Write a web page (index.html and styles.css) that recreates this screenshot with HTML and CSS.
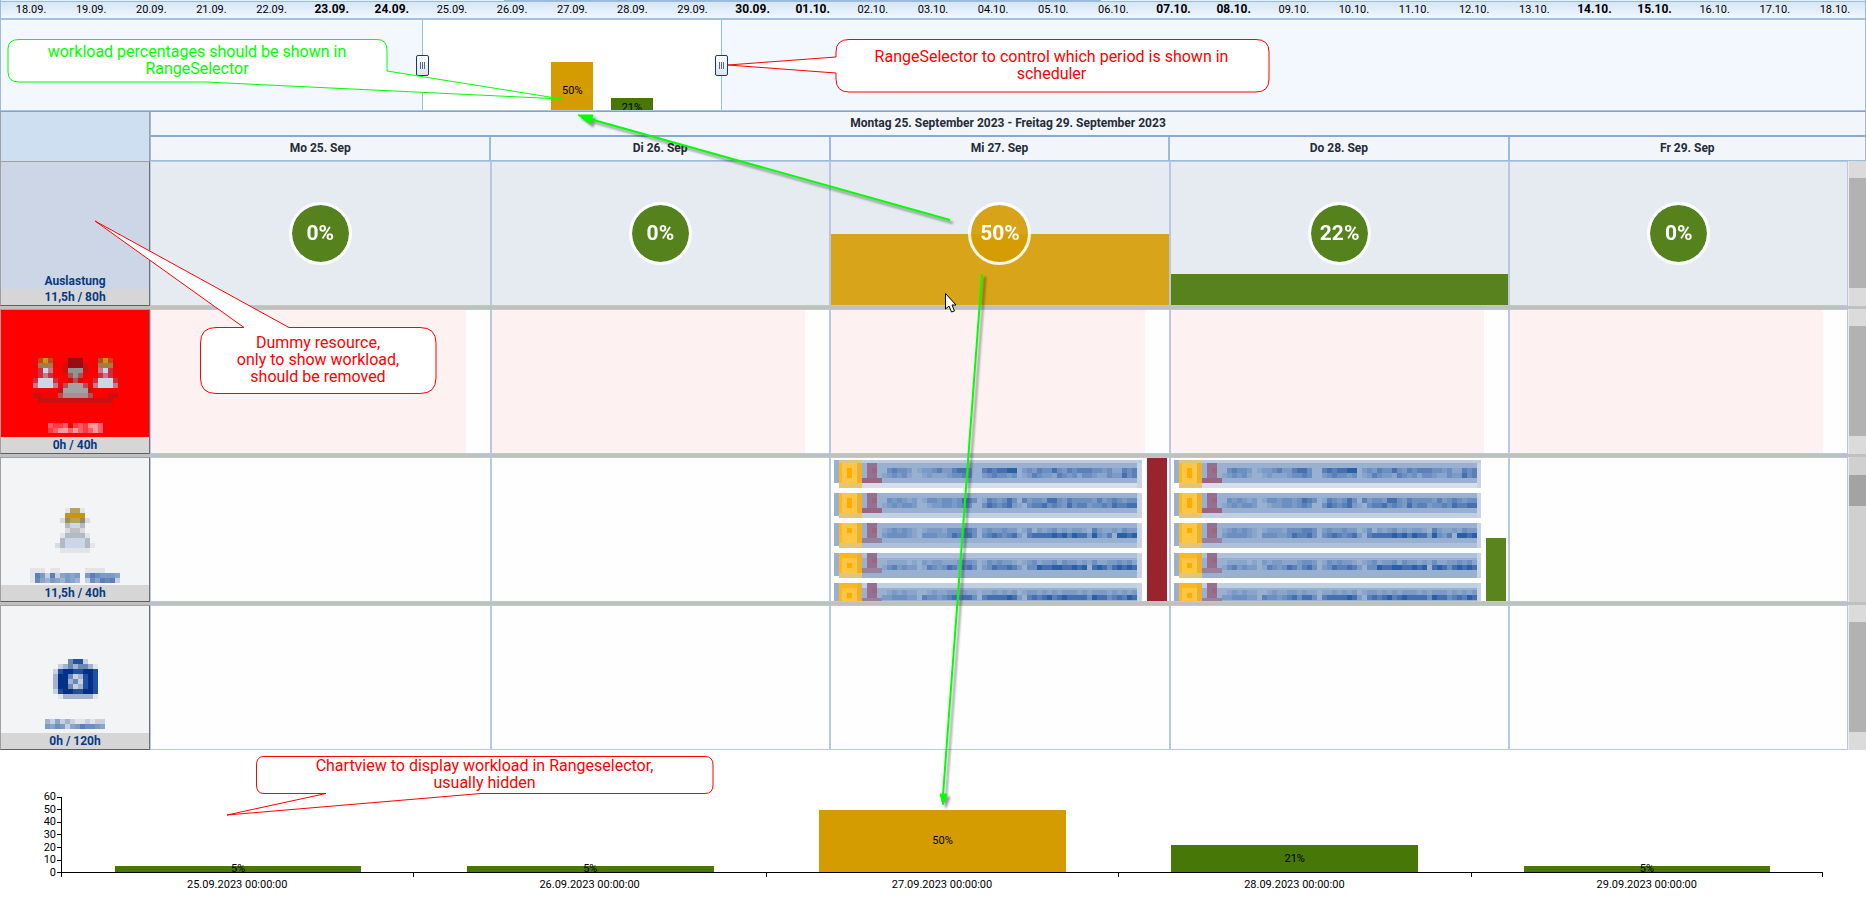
FILE: index.html
```
<!DOCTYPE html>
<html lang="de">
<head>
    <meta charset="UTF-8">
    <meta name="viewport" content="width=device-width, initial-scale=1.0">
    <title>Scheduler workload</title>
    <link rel="stylesheet" href="styles.css">
</head>
<body>
    <!-- Range selector -->
    <section class="range-selector">
        <div class="range-scroll"><div class="range-scroll-thumb"></div></div>
        <div class="range-scale">
            <span>18.09.</span><span>19.09.</span><span>20.09.</span><span>21.09.</span><span>22.09.</span>
            <span class="weekend">23.09.</span><span class="weekend">24.09.</span>
            <span>25.09.</span><span>26.09.</span><span>27.09.</span><span>28.09.</span><span>29.09.</span>
            <span class="weekend">30.09.</span><span class="weekend">01.10.</span>
            <span>02.10.</span><span>03.10.</span><span>04.10.</span><span>05.10.</span><span>06.10.</span>
            <span class="weekend">07.10.</span><span class="weekend">08.10.</span>
            <span>09.10.</span><span>10.10.</span><span>11.10.</span><span>12.10.</span><span>13.10.</span>
            <span class="weekend">14.10.</span><span class="weekend">15.10.</span>
            <span>16.10.</span><span>17.10.</span><span>18.10.</span>
        </div>
        <div class="range-plot">
            <div class="range-selected">
                <button class="range-handle range-handle-left" aria-label="Start"><i></i><i></i><i></i></button>
                <div class="range-day"></div>
                <div class="range-day"></div>
                <div class="range-day"><div class="range-bar half">50%</div></div>
                <div class="range-day"><div class="range-bar low">21%</div></div>
                <div class="range-day"></div>
                <button class="range-handle range-handle-right" aria-label="Ende"><i></i><i></i><i></i></button>
            </div>
        </div>
    </section>

    <!-- Scheduler -->
    <section class="scheduler">
        <div class="scheduler-head">
            <div class="corner"></div>
            <div class="period">Montag 25. September 2023 - Freitag 29. September 2023</div>
            <div class="day-head">Mo 25. Sep</div>
            <div class="day-head">Di 26. Sep</div>
            <div class="day-head">Mi 27. Sep</div>
            <div class="day-head">Do 28. Sep</div>
            <div class="day-head day-head-last">Fr 29. Sep</div>
        </div>

        <div class="row row-load">
            <div class="resource">
                <span class="resource-name">Auslastung</span>
                <span class="resource-hours">11,5h / 80h</span>
            </div>
            <div class="cell"><div class="badge low">0%</div></div>
            <div class="cell"><div class="badge low">0%</div></div>
            <div class="cell"><div class="load half" style="height: 50%"></div><div class="badge half">50%</div></div>
            <div class="cell"><div class="load low" style="height: 22%"></div><div class="badge low">22%</div></div>
            <div class="cell"><div class="badge low">0%</div></div>
            <div class="scroll"><div class="scroll-thumb"></div></div>
        </div>

        <div class="row row-blocked">
            <div class="resource">
                <svg class="mosaic" data-mosaic="team"></svg>
                <svg class="mosaic mosaic-name" data-mosaic="teamName"></svg>
                <span class="resource-hours">0h / 40h</span>
            </div>
            <div class="cell"></div>
            <div class="cell"></div>
            <div class="cell"></div>
            <div class="cell"></div>
            <div class="cell"></div>
            <div class="scroll"><div class="scroll-thumb"></div></div>
        </div>

        <div class="row row-person">
            <div class="resource">
                <svg class="mosaic" data-mosaic="person"></svg>
                <svg class="mosaic mosaic-name" data-mosaic="personName"></svg>
                <span class="resource-hours">11,5h / 40h</span>
            </div>
            <div class="cell"></div>
            <div class="cell"></div>
            <div class="cell cell-tasks">
                <div class="tasks"></div>
                <div class="day-load"><div class="full" style="height: 100%"></div></div>
            </div>
            <div class="cell cell-tasks">
                <div class="tasks"></div>
                <div class="day-load"><div class="low" style="height: 44%"></div></div>
            </div>
            <div class="cell"></div>
            <div class="scroll scroll-long"><div class="scroll-thumb"></div></div>
        </div>

        <div class="row">
            <div class="resource">
                <svg class="mosaic" data-mosaic="bag"></svg>
                <svg class="mosaic mosaic-name" data-mosaic="bagName"></svg>
                <span class="resource-hours">0h / 120h</span>
            </div>
            <div class="cell"></div>
            <div class="cell"></div>
            <div class="cell"></div>
            <div class="cell"></div>
            <div class="cell"></div>
            <div class="scroll"><div class="scroll-thumb"></div></div>
        </div>
    </section>

    <!-- Workload chart -->
    <section class="chart">
        <div class="chart-axis">
            <span>60</span><span>50</span><span>40</span><span>30</span><span>20</span><span>10</span><span>0</span>
        </div>
        <div class="chart-plot">
            <div class="chart-day"><div class="chart-bar low" style="height: 8%">5%</div></div>
            <div class="chart-day"><div class="chart-bar low" style="height: 8%">5%</div></div>
            <div class="chart-day"><div class="chart-bar half" style="height: 83%">50%</div></div>
            <div class="chart-day"><div class="chart-bar low" style="height: 36%">21%</div></div>
            <div class="chart-day"><div class="chart-bar low" style="height: 8%">5%</div></div>
        </div>
        <div class="chart-labels">
            <span>25.09.2023 00:00:00</span>
            <span>26.09.2023 00:00:00</span>
            <span>27.09.2023 00:00:00</span>
            <span>28.09.2023 00:00:00</span>
            <span>29.09.2023 00:00:00</span>
        </div>
    </section>

    <!-- Annotations drawn over the page -->
    <div class="annotations">
        <svg class="annotation-shapes">
            <g class="bubbles">
                <path class="green" d="M19 39.500H377Q387 39.500 387 50V71L562 99L205 82H19Q8 82 8 72V49Q8 39.500 19 39.500Z"/>
                <path class="red" d="M849 39.500H1256Q1269 39.500 1269 52V79Q1269 92 1256 92H849Q836 92 836 79V73L728 65L836 57V52Q836 39.500 849 39.500Z"/>
                <path class="red" d="M216 327.500H244L95 221L289 327.500H420Q436 327.500 436 343V378Q436 393.500 420 393.500H216Q200.500 393.500 200.500 378V343Q200.500 327.500 216 327.500Z"/>
                <path class="red" d="M264 756.500H705Q713 756.500 713 765V785Q713 793.500 705 793.500H481L227 815L326 793.500H264Q256.500 793.500 256.500 785V765Q256.500 756.500 264 756.500Z"/>
            </g>
            <g class="arrows">
                <path class="arrow-line" d="M950 220L590 119"/>
                <path d="M578 115L593 115L590 124Z"/>
                <path class="arrow-line" d="M982 274L943 795"/>
                <path d="M943 805L940 794L947 794Z"/>
            </g>
            <path class="cursor" d="M945.500 293.500V309L949 306L951.500 312L954.500 311L952 305H956Z"/>
        </svg>
        <p class="note note-percent">workload percentages should be shown in<br>RangeSelector</p>
        <p class="note note-range">RangeSelector to control which period is shown in<br>scheduler</p>
        <p class="note note-dummy">Dummy resource,<br>only to show workload,<br>should be removed</p>
        <p class="note note-chart">Chartview to display workload in Rangeselector,<br>usually hidden</p>
    </div>

    <script src="mosaic.js"></script>
</body>
</html>
```
FILE: styles.css
```
* {
    box-sizing: border-box;
}

body {
    margin: 0;
    position: relative;
    background-color: #fff;
    font-family: Roboto, "Liberation Sans", sans-serif;
    font-size: 11px;
    line-height: 12px;
    color: #000;
}

/* Workload colours */
.low {
    background-color: #477706;
}

.half {
    background-color: #d59c02;
}

.full {
    background-color: #9a242e;
}

/* Range selector */
.range-selector {
    border-left: 1px solid #9bbbdc;
    border-right: 1px solid #9bbbdc;
}

.range-scroll {
    height: 2px;
    background-color: #e6f0fa;
    border-bottom: 1px solid #9bbbdc;
}

.range-scroll-thumb {
    width: 32%;
    height: 1px;
    margin-left: 27%;
    background-color: #9bbbdc;
}

.range-scale {
    display: grid;
    grid-template-columns: repeat(31, 1fr);
    height: 18px;
    background: linear-gradient(#d6e6f5, #f0f7fe);
    border-bottom: 2px solid #a3c0e0;
    text-align: center;
    line-height: 15px;
}

.range-scale .weekend {
    font-size: 12px;
    font-weight: bold;
}

.range-plot {
    height: 91px;
    background-color: #f3f7fe;
    border-bottom: 1px solid #a9c4e2;
}

.range-selected {
    position: relative;
    display: grid;
    grid-template-columns: repeat(5, 1fr);
    width: 16.1%;
    height: 90px;
    margin-left: 22.6%;
    background-color: #fff;
    border-left: 1px solid #9bbbdc;
    border-right: 1px solid #9bbbdc;
}

.range-day {
    display: flex;
    align-items: flex-end;
    justify-content: center;
    overflow: hidden;
}

.range-bar {
    width: 42px;
    height: 48px;
    padding-top: 23px;
    text-align: center;
    overflow: hidden;
}

.range-bar.low {
    height: 12px;
    padding-top: 4px;
}

.range-handle {
    position: absolute;
    top: 35px;
    display: flex;
    align-items: center;
    justify-content: center;
    gap: 1px;
    width: 13px;
    height: 21px;
    padding: 0;
    background: linear-gradient(#fff, #dde2ea);
    border: 1px solid #123a78;
    border-radius: 2px;
}

.range-handle i {
    width: 1px;
    height: 7px;
    background-color: #52698f;
}

.range-handle-left {
    left: -7px;
}

.range-handle-right {
    right: -7px;
}

/* Scheduler */
.scheduler {
    font-size: 12px;
    font-weight: bold;
}

.scheduler-head,
.row {
    display: grid;
    grid-template-columns: 150px repeat(5, 1fr) 18px;
}

.scheduler-head {
    grid-template-rows: 25px 24px;
    color: #262b38;
    line-height: 22px;
    text-align: center;
    border-top: 1px solid #7fa3cc;
    border-right: 1px solid #9bbbdc;
}

.corner {
    grid-row: span 2;
    background-color: #cddff0;
    border-left: 1px solid #a0a0a0;
    border-right: 1px solid #a0a0a0;
}

.period {
    grid-column: span 6;
    background-color: #f2f6fb;
    border-left: 1px solid #9bbbdc;
    border-bottom: 2px solid #86abd2;
}

.day-head {
    background-color: #f2f6fb;
    border-left: 2px solid #9bbbdc;
    border-bottom: 1px solid #9bbbdc;
}

.period + .day-head {
    border-left-width: 1px;
}

.day-head-last {
    grid-column: span 2;
}

.row {
    height: 148px;
    border-bottom: 3px solid #c0c0c0;
}

.row:last-child {
    border-bottom: 0;
    height: 145px;
}

.resource {
    display: flex;
    flex-direction: column;
    align-items: center;
    justify-content: flex-end;
    background-color: #f3f4f6;
    border: 1px solid #a0a0a0;
    border-right-color: #707070;
    border-bottom-color: #606060;
    color: #063a82;
}

.row-load .resource {
    background-color: #cdd6e7;
}

.row-blocked .resource {
    background-color: #f00;
}

.resource-name {
    line-height: 16px;
}

.resource-hours {
    width: 100%;
    line-height: 16px;
    text-align: center;
    background-color: #d6d6d6;
}

.mosaic-name {
    margin: 20px 0 4px;
}

.row-person .mosaic-name {
    margin: 15px 0 2px;
}

.cell {
    position: relative;
    min-width: 0;
    background-color: #fefefe;
    border-top: 1px solid #b9c8e0;
    border-bottom: 1px solid #b9c8e0;
    border-left: 2px solid #b9c8e0;
}

.resource + .cell {
    border-left-width: 1px;
}

.cell:nth-child(6) {
    border-right: 1px solid #b9c8e0;
}

.row-load .cell {
    display: flex;
    align-items: center;
    justify-content: center;
    background-color: #e6ebf2;
}

.row-blocked .cell {
    background: linear-gradient(#fef1f1, #fef1f1) no-repeat left / calc(100% - 24px) 100% #fefefe;
}

.load {
    position: absolute;
    left: 0;
    right: 0;
    bottom: 0;
    opacity: 0.9;
}

.badge {
    position: relative;
    width: 63px;
    height: 63px;
    border: 3px solid #fff;
    border-radius: 50%;
    background-clip: padding-box;
    color: #fff;
    font-size: 21px;
    line-height: 57px;
    text-align: center;
    opacity: 0.9;
}

.scroll {
    padding-top: 17px;
    border-left: 1px solid #ececec;
    background-color: #dbdbdb;
}

.scroll-thumb {
    height: 110px;
    background-color: #b2b2b2;
}

.scroll-long {
    padding-top: 18px;
    background-color: #d0d0d0;
}

.scroll-long .scroll-thumb {
    height: 31px;
    background-color: #a3a3a3;
}

/* Pixelated appointments */
.cell-tasks {
    display: flex;
    justify-content: space-between;
    gap: 5px;
    padding: 0 2px 0 3px;
    overflow: hidden;
}

.tasks {
    flex: 1;
    display: flex;
    flex-direction: column;
    gap: 5px;
    min-width: 0;
    height: 143px;
    padding-top: 2px;
    overflow: hidden;
}

.task {
    flex: none;
    width: 100%;
    height: 25px;
}

.task:first-child {
    height: 28px;
}

.day-load {
    display: flex;
    align-items: flex-end;
    width: 20px;
}

.day-load div {
    width: 100%;
}

.day-load .low {
    opacity: 0.9;
}

.mosaic,
.task {
    display: block;
    shape-rendering: crispEdges;
}

/* Workload chart */
.chart {
    display: grid;
    grid-template-columns: 61px 1fr;
    grid-template-rows: 88px 25px;
    margin: 41px 43px 0 0;
}

.chart-axis {
    display: flex;
    flex-direction: column;
    justify-content: space-between;
    text-align: right;
}

.chart-axis span {
    display: flex;
    align-items: center;
    justify-content: flex-end;
    gap: 1px;
}

.chart-axis span::after {
    content: "";
    width: 4px;
    height: 1px;
    background-color: #000;
}

.chart-plot {
    display: grid;
    grid-template-columns: repeat(5, 1fr);
    height: 76px;
    margin-top: 6px;
    border-left: 1px solid #000;
    border-bottom: 1px solid #000;
}

.chart-day {
    display: flex;
    align-items: flex-end;
    justify-content: center;
}

.chart-bar {
    display: flex;
    align-items: center;
    justify-content: center;
    width: 70%;
}

.chart-labels {
    grid-column: 2;
    display: grid;
    grid-template-columns: repeat(5, 1fr);
    margin-top: -6px;
    text-align: center;
}

.chart-labels span {
    height: 19px;
    padding-top: 6px;
    background: linear-gradient(#000, #000) no-repeat left top / 1px 4px;
}

.chart-labels span:last-child {
    background: linear-gradient(#000, #000) no-repeat left top / 1px 4px, linear-gradient(#000, #000) no-repeat right top / 1px 4px;
}

/* Annotations */
.annotations {
    position: absolute;
    inset: 0;
    pointer-events: none;
}

.annotation-shapes {
    display: block;
    width: 100%;
    height: 100%;
}

.bubbles path {
    fill: #fff;
    stroke-width: 1;
}

.bubbles .green {
    stroke: #0f0;
}

.bubbles .red {
    stroke: #f00;
}

.arrows {
    filter: drop-shadow(3px 3px 1px rgba(0, 0, 0, 0.4));
}

.arrows path {
    fill: #0f0;
    stroke: #0f0;
    stroke-width: 1;
}

.arrows .arrow-line {
    stroke-width: 2;
}

.cursor {
    fill: #fff;
    stroke: #000;
}

.note {
    position: absolute;
    margin: 0;
    font-size: 16px;
    line-height: 17px;
    text-align: center;
    color: #f00;
}

.note-percent {
    left: 8px;
    top: 43px;
    width: 378px;
    color: #0f0;
}

.note-range {
    left: 835px;
    top: 48px;
    width: 433px;
}

.note-dummy {
    left: 200px;
    top: 334px;
    width: 236px;
}

.note-chart {
    left: 256px;
    top: 757px;
    width: 457px;
}
```
FILE: mosaic.js
```
// Every character is one 5px square, a dot is left empty
const CELL = 5;
const colors = {
    r: "#cc1010", R: "#980c14", e: "#e80808", o: "#cc4410", g: "#c4980c", p: "#b05020",
    b: "#a57a48", s: "#cc3040", k: "#c4788a", w: "#ccd6e8", n: "#929292", m: "#b25050",
    N: "#a2a2a2", h: "#b08c8c", i: "#ff5b6b", j: "#ff3b40", q: "#ff9a9a",
    y: "#b8a25a", Y: "#968c66", a: "#b2bac6", l: "#e2e4e8", c: "#c0c0c2", t: "#d8dadd",
    B: "#00308a", D: "#22509c", M: "#6c86b8", A: "#a2b2d0", L: "#c8d0e0",
    0: "#9ab0d0", 1: "#8aa5cc", 2: "#7b9ac6", 3: "#6c8fc1", 4: "#5b80b8", 5: "#456fae", 6: "#2a5fa5"
};

const pictures = {
    team: [
        "..e.....e........",
        ".ogp...RRR...pgo.",
        "ebbbe.rRRRr.ebbbe",
        ".swk..rnnnr..kws.",
        ".sks...mnm...sks.",
        "swwws..rmr..swwws",
        "kwwwk.mNNNm.kwwwk",
        ".....rNNNNNr.....",
        "rr...mhhhhhm...rr",
        ".rrrrrrrrrrrrrrr."
    ],
    teamName: [
        "ijjiejijqqi",
        "jiqqiqijiqi"
    ],
    person: [
        "..lyyl..",
        "..gggg..",
        ".tYyyYt.",
        "..awwa..",
        "..tcct..",
        ".laaaal.",
        ".awwwwa.",
        "tawwwwal",
        ".llllll."
    ],
    personName: [
        "lll.ll.....llll...",
        "l42L4L1212.2432221",
        "lM1A21A21A.L314M4L"
    ],
    bag: [
        "...MDDL..",
        ".LAMAMMAl",
        "LDBBDDBBD",
        "ABBMLADBD",
        "ABBAMLDBD",
        "ABBMLADBD",
        "LDBBDDBBD",
        ".lAAAAAAl"
    ],
    bagName: [
        "AL1LALllLlLL",
        "2132L1243321"
    ]
};

const tasks = [
    [
        "034332012234224553004545566023243353243444332311434",
        "123231001211123343002343323012432214323133211322534"
    ],
    [
        "032321201332332354301432353042332553243333242343233",
        "123233200122332343003543452103445343253442334354455"
    ],
    [
        "123232101222133344302322322013021231212210421121322",
        "233332103332235445303454345204555565646552632406656"
    ],
    [
        "011110102122111233201323221012312231322121311223231",
        "134232201432354245302354454203365566556560565356565"
    ],
    [
        "012121100121122121101121212012212121222121222121212",
        "223332204332345355304555565204545645655553655345465"
    ]
];

// light edge above and below each appointment
const edges = [
    ["#9ab0d0", "#d5deea"],
    ["#9ab0d0", "#c1cfe3"],
    ["#9ab0d0", "#afc0db"],
    ["#afc0db", "#9ab0d0"],
    ["#c1cfe3", "#9ab0d0"]
];

function addRect(svg, x, y, width, height, fill) {
    const rect = document.createElementNS("http://www.w3.org/2000/svg", "rect");
    rect.setAttribute("x", x);
    rect.setAttribute("y", y);
    rect.setAttribute("width", width);
    rect.setAttribute("height", height);
    rect.setAttribute("fill", fill);
    svg.appendChild(rect);
}

function drawCells(svg, rows, left, top) {
    rows.forEach((row, y) => {
        [...row].forEach((char, x) => {
            if (char !== ".") {
                addRect(svg, left + x * CELL, top + y * CELL, CELL, CELL, colors[char]);
            }
        });
    });
}

document.querySelectorAll("[data-mosaic]").forEach(svg => {
    const rows = pictures[svg.dataset.mosaic];
    svg.setAttribute("width", rows[0].length * CELL);
    svg.setAttribute("height", rows.length * CELL);
    drawCells(svg, rows, 0, 0);
});

document.querySelectorAll(".tasks").forEach(list => {
    tasks.forEach((rows, i) => {
        const svg = document.createElementNS("http://www.w3.org/2000/svg", "svg");
        // the first appointment has a taller top edge
        const top = i === 0 ? 3 : 0;
        svg.setAttribute("class", "task");
        if (top) {
            addRect(svg, 5, 0, 303, top, "#bccbe0");
        }
        addRect(svg, 0, 0, 5, 23, "#9ab0d0");
        addRect(svg, 5, top, 298, 25, "#9ab0d0");
        addRect(svg, 5, top, 298, 5, edges[i][0]);
        addRect(svg, 5, top + 20, 298, 5, edges[i][1]);
        addRect(svg, 303, top, 5, 25, "#c8d4e6");
        // yellow symbol
        addRect(svg, 5, 0, 23, top + 25, "#e2c47c");
        addRect(svg, 5, top, 23, 20, "#ebb02c");
        addRect(svg, 5, top, 18, 20, "#ffb81c");
        addRect(svg, 8, top + (i < 3 ? 0 : 5), 15, i < 3 ? 20 : 15, "#ffc544");
        addRect(svg, 13, top + (i < 3 ? 5 : 10), 5, i < 2 ? 10 : 5, "#ffac00");
        // red symbol
        addRect(svg, 33, top, 10, 15, "#98708f");
        addRect(svg, 38, top + 5, 5, 5, "#a0647c");
        addRect(svg, 28, top + 15, 20, 5, i < 2 ? "#9b6480" : "#98809f");
        drawCells(svg, rows, 48, top + (i < 3 ? 5 : 7));
        list.appendChild(svg);
    });
});
```
